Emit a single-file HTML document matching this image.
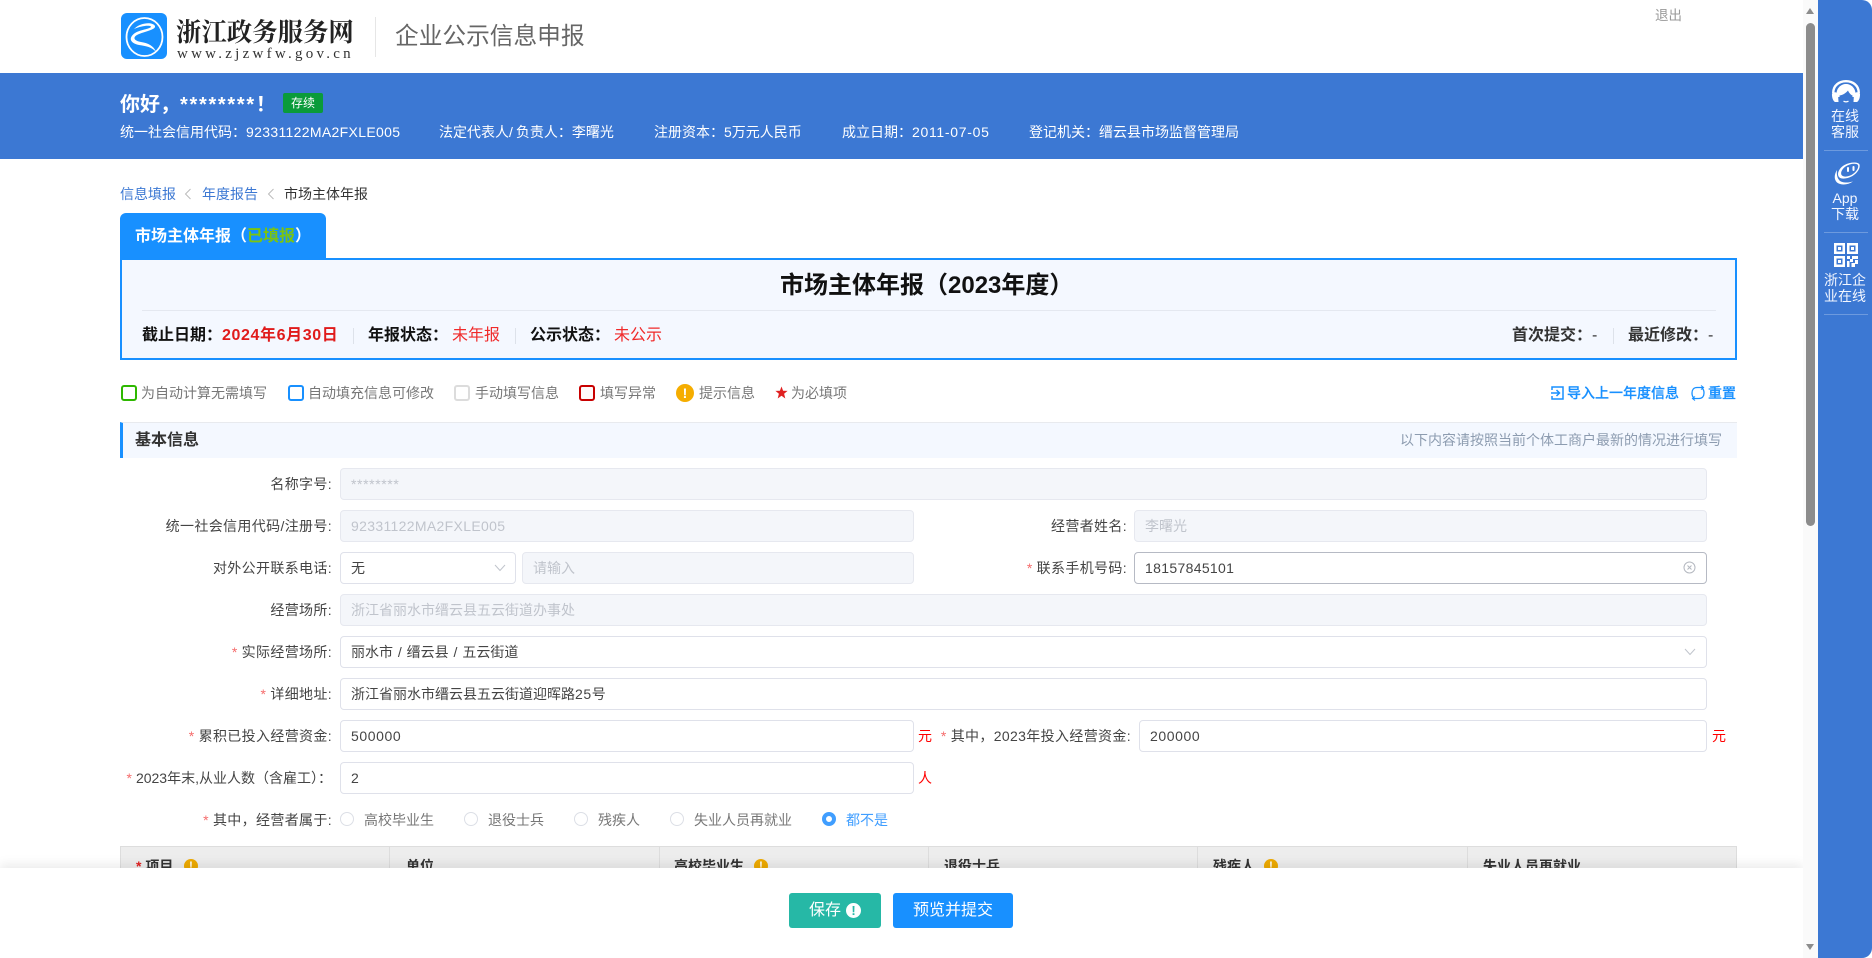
<!DOCTYPE html>
<html lang="zh-CN"><head><meta charset="utf-8"><title>企业公示信息申报</title>
<style>
*{box-sizing:border-box;margin:0;padding:0}
html,body{width:1872px;height:958px;overflow:hidden;background:#fff}
body{position:relative;font-family:"Liberation Sans","Noto Sans CJK SC",sans-serif;font-size:14px;color:#333}
.t{position:absolute;white-space:nowrap;line-height:20px;height:20px}
.a{position:absolute}
.l{position:absolute;white-space:nowrap;line-height:20px;height:20px;text-align:right;color:#444;letter-spacing:.35px}
.l b{color:#f56c6c;font-weight:400;margin-right:4px}
.i{position:absolute;height:32px;border:1px solid #dfe1ea;border-radius:4px;background:#fff;line-height:30px;padding-left:10px;color:#444;white-space:nowrap}
.d{background:#f4f6fa;border-color:#e6e8ef;color:#c0c4cc}
.k{position:absolute;width:16px;height:16px;border-radius:3px;border:2px solid;top:385px;background:#fff}
.g{color:#777}
.sep{position:absolute;width:1px;height:16px;top:326px;background:#dde2ea}
.th{position:absolute;top:856px;font-weight:700;color:#333;white-space:nowrap;line-height:20px}
.o{position:absolute;top:812px;width:14px;height:14px;border:1px solid #dcdfe6;border-radius:50%;background:#fff}
.w{color:#fff}
.ex{position:absolute;border-radius:50%;background:#eeaa00;color:#fff;font-weight:700;text-align:center}
.ln{position:absolute;left:1824px;width:44px;height:1px;background:rgba(255,255,255,.25)}
.c{position:absolute;left:1818px;width:54px;text-align:center;color:#f2f6ff;font-size:14px;line-height:16px;white-space:nowrap}
.n3{letter-spacing:.33px}.n6{letter-spacing:.6px}
</style></head><body>

<!-- header -->
<svg class="a" style="left:121px;top:13px" width="46" height="46" viewBox="0 0 46 46">
<rect width="46" height="46" rx="6" fill="#1890ff"/>
<ellipse cx="23.500" cy="24" rx="18" ry="19" fill="none" stroke="#fff" stroke-width="1.800"/>
<path d="M13 16C20 9 32 9 34 13C35 17 24 18 16 22C11 25 14 28 20 29C27 30 33 33 35 39C31 34 25 33 18 32C9 30 7 25 14 20C21 16 30 16 30 13.500C28 12 20 13 13 16Z" fill="#fff"/>
</svg>
<div class="t" style="left:176px;top:18px;height:26px;font:700 25.400px/26px 'Noto Serif CJK SC','Liberation Serif',serif;color:#222">浙江政务服务网</div>
<div class="t" style="left:177px;top:44px;font:400 15px/20px 'Liberation Serif',serif;letter-spacing:3.250px;color:#333">www.zjzwfw.gov.cn</div>
<div class="a" style="left:375px;top:17px;width:1px;height:40px;background:#e6e6e6"></div>
<div class="t" style="left:395px;top:20px;font-size:23.700px;line-height:34px;height:34px;color:#666">企业公示信息申报</div>
<div class="t" style="left:1655px;top:6px;font-size:13.500px;color:#999">退出</div>

<!-- blue band -->
<div class="a" style="left:0;top:73px;width:1803px;height:86px;background:#3c78d3"></div>
<div class="t w" style="left:120px;top:92px;font-size:20px;font-weight:700;line-height:26px;height:26px">你好，<span style="letter-spacing:1.700px">********</span>！</div>
<div class="a w" style="left:283px;top:93px;width:40px;height:20px;background:#0a9b3a;border-radius:2px;font-size:12px;line-height:20px;text-align:center">存续</div>
<div class="t w" style="left:120px;top:122px;">统一社会信用代码：<span class="n3">92331122MA2FXLE005</span></div>
<div class="t w" style="left:439px;top:122px;">法定代表人<span style="letter-spacing:3px">/</span>负责人：李曙光</div>
<div class="t w" style="left:654px;top:122px;">注册资本：5万元人民币</div>
<div class="t w" style="left:842px;top:122px;">成立日期：<span style="letter-spacing:.7px">2011-07-05</span></div>
<div class="t w" style="left:1029px;top:122px;">登记机关：缙云县市场监督管理局</div>

<!-- breadcrumb -->
<div class="t" style="left:120px;top:184px;color:#3c78d3">信息填报</div>
<svg class="a" style="left:184px;top:188px" width="8" height="12" viewBox="0 0 8 12"><path d="M6.500 1L1.500 6L6.500 11" fill="none" stroke="#bbb" stroke-width="1"/></svg>
<div class="t" style="left:202px;top:184px;color:#3c78d3">年度报告</div>
<svg class="a" style="left:267px;top:188px" width="8" height="12" viewBox="0 0 8 12"><path d="M6.500 1L1.500 6L6.500 11" fill="none" stroke="#bbb" stroke-width="1"/></svg>
<div class="t" style="left:284px;top:184px;color:#333">市场主体年报</div>

<!-- tab + box -->
<div class="a" style="left:120px;top:213px;width:206px;height:46px;background:#1890ff;border-radius:6px 6px 0 0"></div>
<div class="t w" style="left:135px;top:227px;font-size:16px;font-weight:700">市场主体年报（<span style="color:#7cc40f">已填报</span>）</div>
<div class="a" style="left:120px;top:258px;width:1617px;height:102px;background:#f4f8ff;border:2px solid #1890ff"></div>
<div class="t" style="left:780px;top:269px;font-size:24px;font-weight:700;line-height:34px;height:34px;color:#111">市场主体年报（2023年度）</div>
<div class="a" style="left:142px;top:310px;width:1574px;height:1px;background:#e4e8f0"></div>
<div class="t" style="left:142px;top:326px;font-size:16px;font-weight:700;color:#111">截止日期：<span style="color:#e01b1b;letter-spacing:.6px">2024年6月30日</span></div>
<div class="sep" style="left:353px;top:328px"></div>
<div class="t" style="left:368px;top:326px;font-size:16px;font-weight:700;color:#111">年报状态：</div>
<div class="t" style="left:452px;top:326px;font-size:16px;color:#f02a2a">未年报</div>
<div class="sep" style="left:515px;top:328px"></div>
<div class="t" style="left:530px;top:326px;font-size:16px;font-weight:700;color:#111">公示状态：</div>
<div class="t" style="left:614px;top:326px;font-size:16px;color:#f02a2a">未公示</div>
<div class="t" style="left:1512px;top:326px;font-size:16px;color:#333"><span style="font-weight:700">首次提交：</span>-</div>
<div class="sep" style="left:1613px;top:328px"></div>
<div class="t" style="left:1628px;top:326px;font-size:16px;color:#333"><span style="font-weight:700">最近修改：</span>-</div>

<!-- legend -->
<div class="k" style="left:121px;border-color:#2eb800"></div><div class="t g" style="left:141px;top:383px">为自动计算无需填写</div>
<div class="k" style="left:288px;border-color:#1890ff"></div><div class="t g" style="left:308px;top:383px">自动填充信息可修改</div>
<div class="k" style="left:454px;border-color:#dcdcdc"></div><div class="t g" style="left:475px;top:383px">手动填写信息</div>
<div class="k" style="left:579px;border-color:#c80000;background:#fff8f8"></div><div class="t g" style="left:600px;top:383px">填写异常</div>
<div class="ex" style="left:676px;top:384px;width:18px;height:18px;line-height:18px;font-size:14px;background:#f5ad00">!</div><div class="t g" style="left:699px;top:383px">提示信息</div>
<svg class="a" style="left:775px;top:386px" width="13" height="13" viewBox="0 0 13 13"><path d="M6.500 0.500L8.100 4.700L12.600 4.900L9.100 7.800L10.300 12.500L6.500 9.800L2.700 12.500L3.900 7.800L0.400 4.900L4.900 4.700Z" fill="#e02020"/></svg>
<div class="t g" style="left:791px;top:383px">为必填项</div>

<svg class="a" style="left:1550px;top:385px" width="15" height="16" viewBox="0 0 15 16"><path d="M2 5V2H13V14H2V11" fill="none" stroke="#1890ff" stroke-width="1.500"/><path d="M1 8H9M6.500 5L9.500 8L6.500 11" fill="none" stroke="#1890ff" stroke-width="1.500"/></svg>
<div class="t" style="left:1567px;top:383px;color:#1890ff;font-weight:500;-webkit-text-stroke:.2px #1890ff">导入上一年度信息</div>
<svg class="a" style="left:1690px;top:385px" width="16" height="16" viewBox="0 0 16 16"><path d="M13 2.500H7C3.500 2.500 2 5 2 8C2 10 2.500 11.500 3.500 12.500M3 13.500H9C12.500 13.500 14 11 14 8C14 6 13.500 4.500 12.500 3.500" fill="none" stroke="#1890ff" stroke-width="1.300"/><path d="M11 .5L13.500 2.500L11 4.500M5 11.500L2.500 13.500L5 15.500" fill="none" stroke="#1890ff" stroke-width="1.100"/></svg>
<div class="t" style="left:1708px;top:383px;color:#1890ff;font-weight:500;-webkit-text-stroke:.2px #1890ff">重置</div>

<!-- section header -->
<div class="a" style="left:120px;top:422px;width:1617px;height:36px;background:#f4f8ff;border-left:3px solid #1890ff;border-top:1px solid #e8eaee"></div>
<div class="t" style="left:135px;top:431px;font-size:16px;font-weight:700;color:#333">基本信息</div>
<div class="t" style="left:1400px;width:322px;top:430px;text-align:right;font-size:14px;color:#8d9cb0;">以下内容请按照当前个体工商户最新的情况进行填写</div>

<!-- form -->
<div class="l" style="left:100px;width:232px;top:474px">名称字号:</div>
<div class="i d" style="left:340px;top:468px;width:1367px"><span class="n6">********</span></div>

<div class="l" style="left:100px;width:232px;top:516px">统一社会信用代码/注册号:</div>
<div class="i d" style="left:340px;top:510px;width:574px"><span class="n3">92331122MA2FXLE005</span></div>
<div class="l" style="left:900px;width:227px;top:516px">经营者姓名:</div>
<div class="i d" style="left:1134px;top:510px;width:573px">李曙光</div>

<div class="l" style="left:100px;width:232px;top:558px">对外公开联系电话:</div>
<div class="i" style="left:340px;top:552px;width:176px">无</div>
<svg class="a" style="left:494px;top:564px" width="12" height="8" viewBox="0 0 12 8"><path d="M1 1L6 6.500L11 1" fill="none" stroke="#c0c4cc" stroke-width="1"/></svg>
<div class="i d" style="left:522px;top:552px;width:392px">请输入</div>
<div class="l" style="left:900px;width:227px;top:558px"><b>*</b>联系手机号码:</div>
<div class="i" style="left:1134px;top:552px;width:573px;border-color:#b6bac4"><span class="n3">18157845101</span></div>
<svg class="a" style="left:1683px;top:561px" width="13" height="13" viewBox="0 0 13 13"><circle cx="6.500" cy="6.500" r="5.500" fill="none" stroke="#b4b8c0" stroke-width="1"/><path d="M4.500 4.500L8.500 8.500M8.500 4.500L4.500 8.500" stroke="#b4b8c0" stroke-width="1"/></svg>

<div class="l" style="left:100px;width:232px;top:600px">经营场所:</div>
<div class="i d" style="left:340px;top:594px;width:1367px">浙江省丽水市缙云县五云街道办事处</div>

<div class="l" style="left:100px;width:232px;top:642px"><b>*</b>实际经营场所:</div>
<div class="i" style="left:340px;top:636px;width:1367px;word-spacing:1px">丽水市 / 缙云县 / 五云街道</div>
<svg class="a" style="left:1684px;top:648px" width="12" height="8" viewBox="0 0 12 8"><path d="M1 1L6 6.500L11 1" fill="none" stroke="#c0c4cc" stroke-width="1"/></svg>

<div class="l" style="left:100px;width:232px;top:684px"><b>*</b>详细地址:</div>
<div class="i" style="left:340px;top:678px;width:1367px">浙江省丽水市缙云县五云街道迎晖路<span class="n6">25</span>号</div>

<div class="l" style="left:100px;width:232px;top:726px"><b>*</b>累积已投入经营资金:</div>
<div class="i" style="left:340px;top:720px;width:574px"><span class="n6">500000</span></div>
<div class="t" style="left:918px;top:726px;color:#f00">元</div>
<div class="l" style="left:900px;width:231px;top:726px"><b>*</b>其中，2023年投入经营资金:</div>
<div class="i" style="left:1139px;top:720px;width:568px"><span class="n6">200000</span></div>
<div class="t" style="left:1712px;top:726px;color:#f00">元</div>

<div class="l" style="left:100px;width:232px;top:768px;letter-spacing:0"><b>*</b>2023年末,从业人数（含雇工）：</div>
<div class="i" style="left:340px;top:762px;width:574px">2</div>
<div class="t" style="left:918px;top:768px;color:#f00">人</div>

<div class="l" style="left:100px;width:232px;top:810px"><b>*</b>其中，经营者属于:</div>
<div class="o" style="left:340px"></div><div class="t g" style="left:364px;top:810px">高校毕业生</div>
<div class="o" style="left:464px"></div><div class="t g" style="left:488px;top:810px">退役士兵</div>
<div class="o" style="left:574px"></div><div class="t g" style="left:598px;top:810px">残疾人</div>
<div class="o" style="left:670px"></div><div class="t g" style="left:694px;top:810px">失业人员再就业</div>
<div class="o" style="left:822px;border:4.500px solid #409eff"></div><div class="t" style="left:846px;top:810px;color:#409eff">都不是</div>

<!-- table header -->
<div class="a" style="left:120px;top:846px;width:1617px;height:40px;background:#ededed;border:1px solid #ddd"></div>
<div class="a" style="left:389px;top:846px;width:1px;height:40px;background:#ddd"></div>
<div class="a" style="left:659px;top:846px;width:1px;height:40px;background:#ddd"></div>
<div class="a" style="left:928px;top:846px;width:1px;height:40px;background:#ddd"></div>
<div class="a" style="left:1197px;top:846px;width:1px;height:40px;background:#ddd"></div>
<div class="a" style="left:1467px;top:846px;width:1px;height:40px;background:#ddd"></div>
<div class="th" style="left:136px"><span style="color:#e02020">*</span> 项目</div><div class="ex" style="left:184px;top:859px;width:14px;height:14px;font-size:11px;line-height:14px">!</div>
<div class="th" style="left:406px">单位</div>
<div class="th" style="left:674px">高校毕业生</div><div class="ex" style="left:754px;top:859px;width:14px;height:14px;font-size:11px;line-height:14px">!</div>
<div class="th" style="left:944px">退役士兵</div>
<div class="th" style="left:1213px">残疾人</div><div class="ex" style="left:1264px;top:859px;width:14px;height:14px;font-size:11px;line-height:14px">!</div>
<div class="th" style="left:1483px">失业人员再就业</div>

<!-- footer -->
<div class="a" style="left:0;top:868px;width:1803px;height:90px;background:#fff;box-shadow:0 -4px 10px rgba(0,0,0,.08)"></div>
<div class="a w" style="left:789px;top:893px;width:92px;height:35px;background:#26b8a6;border-radius:3px;font-size:16px;line-height:35px;padding-left:20px">保存</div>
<div class="a" style="left:846px;top:903px;width:15px;height:15px;border-radius:50%;background:#fff;color:#26b8a6;font:700 13px/15px 'Liberation Sans',sans-serif;text-align:center">!</div>
<div class="a w" style="left:893px;top:893px;width:120px;height:35px;background:#1890ff;border-radius:3px;font-size:16px;line-height:35px;text-align:center">预览并提交</div>

<!-- scrollbar -->
<div class="a" style="left:1803px;top:0;width:15px;height:958px;background:#fafafa"></div>
<div class="a" style="left:1806px;top:8px;width:0;height:0;border-left:4.500px solid transparent;border-right:4.500px solid transparent;border-bottom:6px solid #8c8c8c"></div>
<div class="a" style="left:1806px;top:23px;width:9px;height:503px;background:#8c8c8c;border-radius:5px"></div>
<div class="a" style="left:1806px;top:944px;width:0;height:0;border-left:4.500px solid transparent;border-right:4.500px solid transparent;border-top:6px solid #8c8c8c"></div>

<!-- right panel -->
<div class="a" style="left:1818px;top:0;width:54px;height:958px;background:#3c78d3;border-radius:0 10px 10px 0"></div>
<svg class="a" style="left:1831px;top:80px" width="30" height="23" viewBox="0 0 30 23">
<path d="M2.200 13C2.200 5.500 8 1.200 15 1.200S27.800 5.500 27.800 13" fill="none" stroke="#fff" stroke-width="2.400"/>
<path d="M5.500 14C5.500 8 10 4 15 4S24.500 8 24.500 14L24 17L6 17Z" fill="#fff"/>
<path d="M1 13.500C3 11.500 6 12 7 14L7.500 22H4C2 21 .7 17 1 13.500ZM29 13.500C27 11.500 24 12 23 14L22.500 22H26C28 21 29.300 17 29 13.500Z" fill="#fff"/>
<path d="M8.500 15.500C12 15 15 13 17 10.500C18 13 20 15 21.500 15.500C21.500 19.500 19 23 15 23C11 23 8.500 19.500 8.500 15.500Z" fill="#3c78d3"/>
<path d="M12.500 21.200Q15 22.500 17.500 21.200" fill="none" stroke="#fff" stroke-width="1.200"/>
</svg>
<div class="c" style="top:108px">在线<br>客服</div>
<div class="ln" style="top:150px"></div>
<svg class="a" style="left:1834px;top:162px" width="26" height="23" viewBox="0 0 26 23">
<path fill-rule="evenodd" d="M25.500 2.500C26.500 6 23.500 11 18.500 14C13 17 7 17.500 5 15C2.500 12 5 6 10.500 3C16 0 24 -.5 25.500 2.500ZM24 3C22 .8 15.500 1.800 11.500 4.500C8 7 6 11 7.800 13.300C10 15.500 15 14.700 19 12C22.500 9.500 25 5.500 24 3Z" fill="#fff"/>
<path d="M3 8C.5 12 -.5 17 3 20.500C7 23.500 14 23 19 19.500C14 21 8 21 5.500 18.500C3 16 2.500 12 3 8Z" fill="#fff"/>
<rect x="13" y="5" width="2" height="5" rx="1" fill="#fff"/><rect x="18.500" y="4" width="2" height="5" rx="1" fill="#fff"/>
</svg>
<div class="c" style="top:190px">App<br>下载</div>
<div class="ln" style="top:232px"></div>
<svg class="a" style="left:1834px;top:243px" width="24" height="24" viewBox="0 0 24 24" fill="#fff">
<path fill-rule="evenodd" d="M0 0H11V11H0ZM2.500 2.500V8.500H8.500V2.500ZM13 0H24V11H13ZM15.500 2.500V8.500H21.500V2.500ZM0 13H11V24H0ZM2.500 15.500V21.500H8.500V15.500Z"/>
<path d="M4 4H7V7H4ZM17 4H20V7H17ZM4 17H7V20H4Z"/>
<path d="M13 13H16V16H13ZM18 13H24V16H18ZM16 16H19V19H16ZM21 17H24V21H21ZM13 18H15.500V24H13ZM17.500 20H21V24H17.500Z"/>
</svg>
<div class="c" style="top:272px">浙江企<br>业在线</div>
<div class="ln" style="top:314px"></div>
</body></html>
